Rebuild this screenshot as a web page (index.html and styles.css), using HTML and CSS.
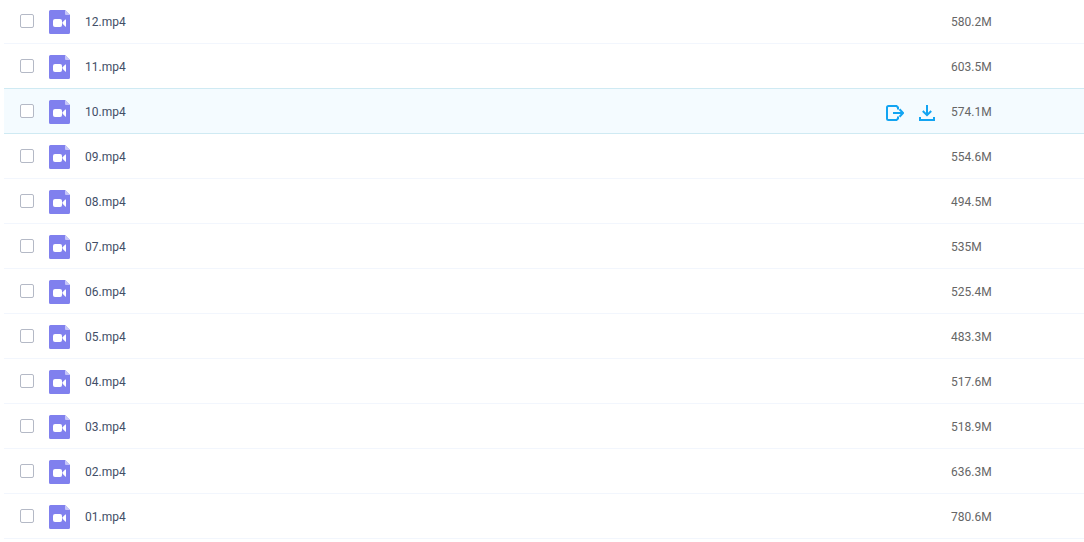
FILE: index.html
```html
<!DOCTYPE html>
<html lang="en">
    <head>
        <meta charset="utf-8">
        <title>Files</title>
        <link rel="stylesheet" href="styles.css">
    </head>

    <body>
        <!-- shared icons -->
        <svg class="sprite" aria-hidden="true">
            <symbol id="video" viewBox="0 0 21 24">
                <path d="M1.500 0H16l5 5v17.500a1.500 1.500 0 0 1-1.500 1.500h-18A1.500 1.500 0 0 1 0 22.500v-21A1.500 1.500 0 0 1 1.500 0z" fill="#8080ee"/>
                <path d="M16 0l5 5h-4a1 1 0 0 1-1-1z" fill="#c6c6f8"/>
                <rect x="4" y="9" width="9" height="8" rx="2" fill="#fff"/>
                <path d="M13.600 12.200l2.600-2.600q.8-.6.8.4v6q0 1-.8.4l-2.600-2.600z" fill="#fff"/>
            </symbol>
            <symbol id="share" viewBox="0 0 18 16">
                <path d="M12 4.500V2.500L10.500 1H2.500Q1 1 1 2.500v11Q1 15 2.500 15h8l1.500-1.500v-2M7 8h10M13.500 4.200L17 8l-3.500 3.800" fill="none" stroke="#12a4f2" stroke-width="2"/>
            </symbol>
            <symbol id="download" viewBox="0 0 16 16">
                <path d="M8 0v10M3.800 6L8 10.200 12.200 6M1 12V15h14v-3" fill="none" stroke="#12a4f2" stroke-width="2"/>
            </symbol>
        </svg>

        <table class="files">
            <tbody id="list"></tbody>
        </table>

        <script>
            const files = [
                ['12.mp4', '580.2M'],
                ['11.mp4', '603.5M'],
                ['10.mp4', '574.1M'],
                ['09.mp4', '554.6M'],
                ['08.mp4', '494.5M'],
                ['07.mp4', '535M'],
                ['06.mp4', '525.4M'],
                ['05.mp4', '483.3M'],
                ['04.mp4', '517.6M'],
                ['03.mp4', '518.9M'],
                ['02.mp4', '636.3M'],
                ['01.mp4', '780.6M']
            ];
            const active = '10.mp4';

            const actions = `
                <div class="actions">
                    <button type="button" aria-label="Share"><svg width="18" height="16"><use href="#share"/></svg></button>
                    <button type="button" aria-label="Download"><svg width="16" height="16"><use href="#download"/></svg></button>
                </div>`;

            const list = document.getElementById('list');

            for (const [name, size] of files)
            {
                const row = document.createElement('tr');
                row.className = name === active ? 'row active' : 'row';
                row.innerHTML = `
                    <td class="name">
                        <div class="file">
                            <input type="checkbox" id="f${name}">
                            <svg class="icon" width="21" height="24"><use href="#video"/></svg>
                            <label for="f${name}">${name}</label>
                            ${name === active ? actions : ''}
                        </div>
                    </td>
                    <td class="size">${size}</td>
                `;
                list.appendChild(row);
            }
        </script>
    </body>
</html>
```

FILE: styles.css
```css
body {
    margin: 0 0 0 4px;
    background-color: #fff;
    font-family: Roboto, sans-serif;
    font-size: 12px;
    line-height: 16px;
}

.sprite {
    display: none;
}

.files {
    width: 100%;
    margin-top: -1px;
    border-collapse: separate;
    border-spacing: 0;
}

.row td {
    box-sizing: border-box;
    height: 45px;
    padding: 0;
    border-bottom: 1px solid #f2f6fd;
}

.active td {
    background-color: #f4fbff;
}

.active td,
.row:has(+ .active) td {
    border-bottom-color: #cfeaf3;
}

.file {
    display: flex;
    align-items: center;
    padding-left: 16px;
}

.file input {
    appearance: none;
    box-sizing: border-box;
    width: 14px;
    height: 14px;
    margin: 0;
    border: 1px solid #b4b9c6;
    border-radius: 2px;
    background-color: #fff;
}

.icon {
    margin: 1px 15px 0;
}

.file label {
    padding-top: 2px;
    color: #424e67;
}

.actions {
    display: flex;
    gap: 15px;
    margin: 3px 16px 0 auto;
}

.actions button {
    padding: 0;
    border: 0;
    background: none;
    cursor: pointer;
}

.actions svg {
    display: block;
}

.row .size {
    width: 133px;
    padding-top: 2px;
    color: #666;
}
```
